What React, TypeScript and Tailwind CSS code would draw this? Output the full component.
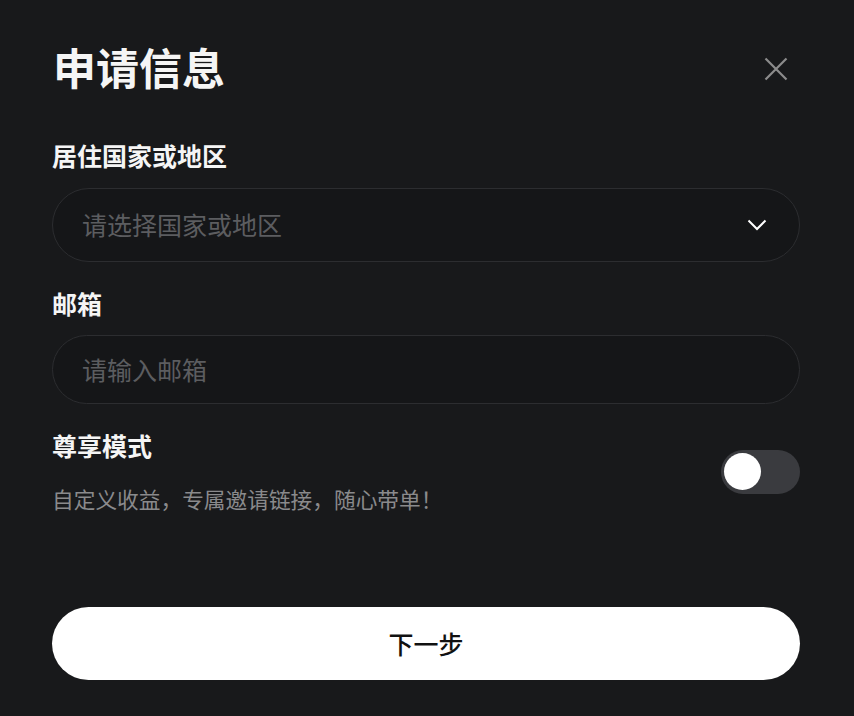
import React, { useState } from "react";

export default function App() {
  const [on, setOn] = useState(false);
  return (
    <div
      className="w-full min-h-[716px] bg-[#18191b] text-white pl-[52px] pr-[54px] pt-[45px] pb-[36px]"
      style={{ fontFamily: '"Noto Sans CJK SC", "Noto Sans", sans-serif' }}
    >
      <div className="flex items-center justify-between h-[48px]">
        <h1 className="text-[43px] leading-[43px] font-bold text-[#f5f5f5] pl-[1px] mb-[6px]">申请信息</h1>
        <button className="w-[48px] h-[48px] flex items-center justify-center">
          <svg width="24" height="24" viewBox="0 0 24 24" fill="none">
            <path d="M1.5 1.5L22.5 22.5M22.5 1.5L1.5 22.5" stroke="#8c8c8c" strokeWidth="2.2" strokeLinecap="butt" />
          </svg>
        </button>
      </div>

      <div className="mt-[50px] text-[25px] leading-[25px] font-bold text-[#f5f5f5]">居住国家或地区</div>
      <div className="mt-[20px] h-[74px] rounded-full border border-[#2c2d30] bg-[#151618] flex items-center justify-between pl-[29px] pr-[32px]">
        <span className="text-[25px] text-[#5c5d60]">请选择国家或地区</span>
        <svg width="20" height="12" viewBox="0 0 20 12" fill="none">
          <path d="M1.5 1.5L10 10L18.5 1.5" stroke="#ffffff" strokeWidth="2" />
        </svg>
      </div>

      <div className="mt-[29px] text-[25px] leading-[25px] font-bold text-[#f5f5f5]">邮箱</div>
      <div className="mt-[19px] h-[69px] rounded-full border border-[#2c2d30] bg-[#151618] flex items-center pl-[29px]">
        <span className="text-[25px] text-[#5c5d60]">请输入邮箱</span>
      </div>

      <div className="mt-[29px] flex items-center justify-between">
        <div>
          <div className="text-[25px] leading-[25px] font-bold text-[#f5f5f5]">尊享模式</div>
          <div className="mt-[30px] text-[21.7px] leading-[22px] text-[#8a8a8c]">自定义收益，专属邀请链接，随心带单！</div>
        </div>
        <button
          onClick={() => setOn(!on)}
          className="w-[79px] h-[44px] rounded-full bg-[#3a3b3f] flex items-center px-[3px]"
        >
          <span className="w-[37px] h-[37px] rounded-full bg-white block" />
        </button>
      </div>

      <button className="mt-[97px] w-full h-[73px] rounded-full bg-white text-[#111] text-[25px] font-medium flex items-center justify-center">
        下一步
      </button>
    </div>
  );
}
